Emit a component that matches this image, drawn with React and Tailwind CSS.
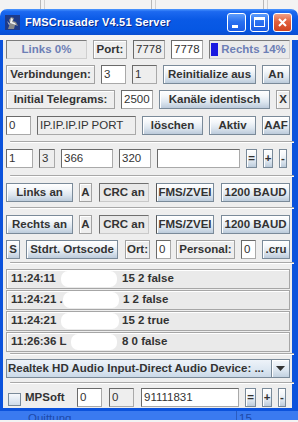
import React from 'react'

const FONT = "font-['Liberation_Sans',Arial,sans-serif]"

function Btn({ className = '', children }) {
  return (
    <div className={`h-[19px] shrink-0 flex items-center justify-center border border-[#7a8a99] shadow-[inset_1px_1px_0_#ffffff] bg-[linear-gradient(to_bottom,#ffffff_0%,#f4f7fa_30%,#dde6ef_65%,#bccbdb_100%)] text-[11.5px] font-bold text-[#333] leading-none whitespace-nowrap overflow-hidden ${className}`}>
      {children}
    </div>
  )
}

function Lbl({ className = '', children }) {
  return (
    <div className={`h-[19px] shrink-0 flex items-center justify-center border border-[#a2a2a2] shadow-[inset_1px_1px_0_#ffffff] bg-[#eeeeee] text-[11.5px] font-bold text-[#333] leading-none whitespace-nowrap overflow-hidden ${className}`}>
      {children}
    </div>
  )
}

function Inset({ className = '', children }) {
  return (
    <div className={`h-[19px] shrink-0 flex items-center justify-center border border-t-[#6f6f6f] border-l-[#6f6f6f] border-r-[#c9c9c9] border-b-[#c9c9c9] bg-[#e9e9e9] text-[11.5px] font-bold text-[#333] leading-none whitespace-nowrap overflow-hidden ${className}`}>
      {children}
    </div>
  )
}

function Fld({ className = '', ro, children }) {
  return (
    <div className={`h-[19px] shrink-0 flex items-center pl-[2px] border border-t-[#6a6a6a] border-l-[#6a6a6a] border-r-[#a9a9a9] border-b-[#a9a9a9] ${ro ? 'bg-[#eeeeee]' : 'bg-white'} text-[11.5px] text-[#333] leading-none whitespace-nowrap overflow-hidden ${className}`}>
      {children}
    </div>
  )
}

function Prog({ className = '', fill, children }) {
  return (
    <div className={`h-[19px] shrink-0 flex items-center border border-t-[#7c7c7c] border-l-[#7c7c7c] border-r-[#cfcfcf] border-b-[#cfcfcf] bg-[#eaeaea] ${className}`}>
      {fill ? <div className="ml-[1px] w-[7px] h-[13px] bg-[#1a1ae0] shrink-0" /> : null}
      <div className="flex-1 text-center text-[11.5px] font-bold text-[#6d7fb6] leading-none whitespace-nowrap">{children}</div>
    </div>
  )
}

function Sep({ className = '' }) {
  return (
    <div className={`ml-[4px] w-[284px] ${className}`}>
      <div className="h-px bg-[#a8a8a8] rounded-full" />
      <div className="h-px bg-[#ffffff]" />
    </div>
  )
}

function SignBtns() {
  return (
    <>
      <Btn className="ml-[6px] w-[11px]">=</Btn>
      <Btn className="ml-[6px] w-[10px]">+</Btn>
      <Btn className="ml-[6px] w-[8px]">-</Btn>
    </>
  )
}

function LogRow({ time, tw, bw, gap, rest }) {
  return (
    <div className="h-[20px] mb-px flex items-center pl-[4px] border border-[#a6a6a6] shadow-[inset_1px_1px_0_#ffffff] bg-[#eaeaea] text-[11.5px] font-bold text-[#333] whitespace-nowrap">
      <span className="shrink-0" style={{ width: tw }}>{time}</span>
      <span className="shrink-0 h-[16px] bg-white rounded-[7px]" style={{ width: bw }} />
      <span style={{ marginLeft: gap }}>{rest}</span>
    </div>
  )
}

function Crusader() {
  return (
    <svg width="15" height="15" viewBox="0 0 15 15">
      <rect width="15" height="15" fill="#1d3a8a" />
      <path d="M3 14 L5 8 L4 5 L6 2 L9 3 L8 6 L11 7 L13 11 L10 10 L9 14 Z" fill="#8a8a8a" />
      <path d="M5 8 L6 3 L8 4 L7 7 L10 8 L11 10 L8 9 Z" fill="#f2f2f2" />
      <path d="M2 6 L5 9 L4 10 Z" fill="#d0d0d0" />
    </svg>
  )
}

function CapBtn({ kind }) {
  if (kind === 'close') {
    return (
      <div className="w-[19px] h-[19px] rounded-[3px] border border-white bg-[linear-gradient(to_bottom,#f0a088_0%,#e2603c_45%,#cf4420_100%)] flex items-center justify-center">
        <svg width="11" height="11" viewBox="0 0 11 11">
          <path d="M2 2 L9 9 M9 2 L2 9" stroke="#ffffff" strokeWidth="2" />
        </svg>
      </div>
    )
  }
  return (
    <div className="w-[19px] h-[19px] rounded-[3px] border border-white bg-[linear-gradient(to_bottom,#5e9cfb_0%,#2a71f0_45%,#1a5ce6_100%)] flex items-center justify-center">
      {kind === 'min' ? (
        <div className="w-[6px] h-[3px] bg-white mt-[8px] mr-[3px]" />
      ) : (
        <div className="w-[11px] h-[10px] border border-white border-t-[3px]" />
      )}
    </div>
  )
}

export default function App() {
  return (
    <div className={`w-[298px] h-[422px] overflow-hidden bg-[#f3f3f3] ${FONT}`}>
      {/* what lies behind the window */}
      <div className="h-[9px] flex">
        <div className="ml-[40px] w-px bg-[#b8b8b8]" />
        <div className="ml-[3px] w-px bg-[#d0d0d0]" />
        <div className="ml-[106px] w-px bg-[#b8b8b8]" />
        <div className="ml-[3px] w-px bg-[#d0d0d0]" />
        <div className="ml-[107px] w-px bg-[#b8b8b8]" />
        <div className="ml-[3px] w-px bg-[#d0d0d0]" />
      </div>

      {/* window */}
      <div className="w-[298px]">
        <div className="h-[26px] rounded-t-[7px] flex items-center bg-[linear-gradient(to_bottom,#4d98ff_0%,#1d69f0_10%,#0a5ae6_40%,#0657e3_80%,#0a4ed0_100%)]">
          <div className="ml-[5px]"><Crusader /></div>
          <div className="ml-[5px] text-[11px] font-bold text-white tracking-[0.2px] [text-shadow:1px_1px_0_#0a2a8a] whitespace-nowrap">FMSCrusader V4.51 Server</div>
          <div className="ml-auto mr-[6px] flex gap-[4px]">
            <CapBtn kind="min" />
            <CapBtn kind="max" />
            <CapBtn kind="close" />
          </div>
        </div>

        <div className="border-l-[3px] border-r-[6px] border-b-[3px] border-[#0b52dc] bg-[#eeeeee] pl-[3px] pb-px">
          {/* row 1 */}
          <div className="mt-[5px] flex">
            <Prog className="w-[81px]">Links 0%</Prog>
            <Lbl className="ml-[6px] w-[34px]">Port:</Lbl>
            <Fld ro className="ml-[6px] w-[32px]">7778</Fld>
            <Fld className="ml-[6px] w-[32px]">7778</Fld>
            <Prog fill className="ml-[6px] w-[81px]">Rechts 14%</Prog>
          </div>
          {/* row 2 */}
          <div className="mt-[6px] flex">
            <Lbl className="w-[89px]">Verbindungen:</Lbl>
            <Fld className="ml-[6px] w-[25px]">3</Fld>
            <Fld ro className="ml-[6px] w-[25px]">1</Fld>
            <Btn className="ml-[6px] w-[93px]">Reinitialize aus</Btn>
            <Btn className="ml-[6px] w-[28px]">An</Btn>
          </div>
          {/* row 3 */}
          <div className="mt-[6px] flex">
            <Lbl className="w-[109px]">Initial Telegrams:</Lbl>
            <Fld className="ml-[6px] w-[32px]">2500</Fld>
            <Btn className="ml-[6px] w-[111px]">Kanäle identisch</Btn>
            <Lbl className="ml-[6px] w-[14px]">X</Lbl>
          </div>
          {/* row 4 */}
          <div className="mt-[7px] flex">
            <Fld className="w-[25px]">0</Fld>
            <Fld ro className="ml-[6px] w-[99px]">IP.IP.IP.IP PORT</Fld>
            <Btn className="ml-[6px] w-[61px]">löschen</Btn>
            <Btn className="ml-[6px] w-[47px]">Aktiv</Btn>
            <Btn className="ml-[6px] w-[28px]">AAF</Btn>
          </div>

          <Sep className="mt-[6px]" />

          {/* row 5 */}
          <div className="mt-[6px] flex">
            <Fld className="w-[27px]">1</Fld>
            <Fld ro className="ml-[6px] w-[16px]">3</Fld>
            <Fld className="ml-[6px] w-[52px] relative">
              366
              <span className="absolute -top-px left-[20px] w-[14px] h-[5px] bg-white rounded-b-[4px]" />
            </Fld>
            <Fld className="ml-[6px] w-[32px]">320</Fld>
            <Fld className="ml-[6px] w-[83px] relative">
              <span className="absolute -top-px -left-px w-[48px] h-[9px] bg-white rounded-br-[6px]" />
            </Fld>
            <SignBtns />
          </div>

          <Sep className="mt-[7px]" />

          {/* row 6 */}
          <div className="mt-[6px] flex">
            <Btn className="w-[67px]">Links an</Btn>
            <Lbl className="ml-[6px] w-[13px]">A</Lbl>
            <Inset className="ml-[7px] w-[50px]">CRC an</Inset>
            <Btn className="ml-[7px] w-[58px] border-l-[#555]">FMS/ZVEI</Btn>
            <Btn className="ml-[7px] w-[69px]">1200 BAUD</Btn>
          </div>

          <Sep className="mt-[5px]" />

          {/* row 7 */}
          <div className="mt-[6px] flex">
            <Btn className="w-[67px]">Rechts an</Btn>
            <Lbl className="ml-[6px] w-[13px]">A</Lbl>
            <Inset className="ml-[7px] w-[50px]">CRC an</Inset>
            <Btn className="ml-[7px] w-[58px] border-l-[#555]">FMS/ZVEI</Btn>
            <Btn className="ml-[7px] w-[69px]">1200 BAUD</Btn>
          </div>
          {/* row 8 */}
          <div className="mt-[6px] flex">
            <Btn className="w-[14px] bg-[linear-gradient(to_bottom,#e6eef8_0%,#c6d8ec_100%)]">S</Btn>
            <Btn className="ml-[6px] w-[92px]">Stdrt. Ortscode</Btn>
            <Lbl className="ml-[7px] w-[25px]">Ort:</Lbl>
            <Fld className="ml-[6px] w-[15px]">0</Fld>
            <Lbl className="ml-[5px] w-[59px]">Personal:</Lbl>
            <Fld className="ml-[6px] w-[15px]">0</Fld>
            <Btn className="ml-[6px] w-[28px]">.cru</Btn>
          </div>

          <Sep className="mt-[3px]" />

          {/* log */}
          <div className="mt-[5px] w-[284px]">
            <LogRow time="11:24:11" tw={50} bw={56} gap={5} rest="15 2 false" />
            <LogRow time="11:24:21 ." tw={52} bw={56} gap={4} rest="1 2 false" />
            <LogRow time="11:24:21" tw={50} bw={58} gap={3} rest="15 2 true" />
            <LogRow time="11:26:36 L" tw={60} bw={46} gap={5} rest="8 0 false" />
          </div>

          <Sep className="mt-[1px]" />

          {/* audio device */}
          <div className="mt-[4px] w-[284px] h-[19px] flex border border-[#7a8a99] bg-[linear-gradient(to_bottom,#eef3f9_0%,#dbe6f1_60%,#cad9e8_100%)]">
            <div className="flex-1 flex items-center pl-px text-[11.5px] font-bold text-[#333] whitespace-nowrap overflow-hidden">
              Realtek HD Audio Input-Direct Audio Device: ...
            </div>
            <div className="w-[18px] flex items-center justify-center border-l border-[#7a8a99] shadow-[inset_1px_1px_0_#ffffff] bg-[linear-gradient(to_bottom,#f7f9fc_0%,#dce6f0_60%,#c2d1e0_100%)]">
              <svg width="9" height="5" viewBox="0 0 9 5">
                <path d="M0 0 H9 L4.5 5 Z" fill="#333" />
              </svg>
            </div>
          </div>

          <Sep className="mt-[4px]" />

          {/* bottom row */}
          <div className="mt-[4px] flex items-center">
            <div className="ml-[2px] mt-[3px] w-[13px] h-[13px] shrink-0 border border-[#7a8a99] bg-[linear-gradient(to_bottom,#f6f9fc_0%,#cfdceb_100%)]" />
            <div className="ml-[4px] w-[45px] text-[11.5px] font-bold text-[#333]">MPSoft</div>
            <Fld className="ml-[7px] w-[25px]">0</Fld>
            <Fld ro className="ml-[7px] w-[25px]">0</Fld>
            <Fld className="ml-[7px] w-[98px]">91111831</Fld>
            <SignBtns />
          </div>
        </div>
      </div>

      {/* selected table row behind the window */}
      <div className="h-[9px] flex bg-[#3a7af0] text-[11.5px] leading-[14px] text-[#1d49a8] overflow-hidden">
        <div className="ml-[28px] w-[208px]">Quittung</div>
        <div className="w-px bg-[#2a5cc0]" />
        <div className="ml-[2px]">15</div>
      </div>
    </div>
  )
}
